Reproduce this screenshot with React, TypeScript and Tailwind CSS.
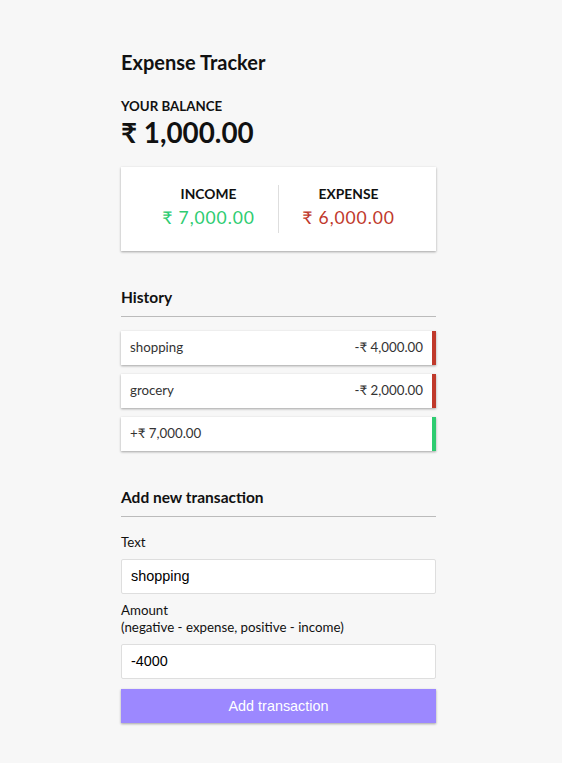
const shadow = 'shadow-[0_1px_3px_rgba(0,0,0,0.12),0_1px_2px_rgba(0,0,0,0.24)]';

type Tx = { id: number; text: string; amount: string; kind: 'plus' | 'minus' };

const transactions: Tx[] = [
  { id: 1, text: 'shopping', amount: '-₹ 4,000.00', kind: 'minus' },
  { id: 2, text: 'grocery', amount: '-₹ 2,000.00', kind: 'minus' },
  { id: 3, text: '+₹ 7,000.00', amount: '', kind: 'plus' },
];

export default function App() {
  return (
    <div className="min-h-screen bg-[#f7f7f7] font-['Lato','Noto_Sans',sans-serif] text-[13.3px] text-[#111]">
      <div className="ml-[121px] w-[315px] pt-[49px] pb-[27px]">
        <h2 className="text-[20px] font-bold leading-[26px]">Expense Tracker</h2>

        <div className="mt-[23px]">
          <h4 className="text-[13.3px] font-bold uppercase leading-[17px]">Your Balance</h4>
          <h1 className="text-[27.8px] font-bold leading-[35px]">₹ 1,000.00</h1>
        </div>

        <div className={`mt-[17px] flex bg-white p-[18px] ${shadow}`}>
          <div className="flex-1 border-r border-[#dedede] text-center">
            <h4 className="text-[13.8px] font-bold uppercase leading-[17px]">Income</h4>
            <p className="my-[4.5px] text-[17.5px] leading-[21.6px] tracking-[0.9px] text-[#2ecc71]">₹ 7,000.00</p>
          </div>
          <div className="flex-1 text-center">
            <h4 className="text-[13.8px] font-bold uppercase leading-[17px]">Expense</h4>
            <p className="my-[4.5px] text-[17.5px] leading-[21.6px] tracking-[0.9px] text-[#c0392b]">₹ 6,000.00</p>
          </div>
        </div>

        <h3 className="mt-[36px] border-b border-[#bbb] pb-[9px] text-[15.5px] font-bold leading-[20px]">History</h3>
        <ul className="mt-[14px] flex flex-col gap-[9px]">
          {transactions.map((t) => (
            <li
              key={t.id}
              className={`flex h-[34px] items-center justify-between bg-white px-[9px] text-[#333] ${shadow} ${
                t.kind === 'plus' ? 'border-r-[4.5px] border-[#2ecc71]' : 'border-r-[4.5px] border-[#c0392b]'
              }`}
            >
              <span>{t.text}</span>
              <span>{t.amount}</span>
            </li>
          ))}
        </ul>

        <h3 className="mt-[36px] border-b border-[#bbb] pb-[9px] text-[15.5px] font-bold leading-[20px]">Add new transaction</h3>
        <form className="mt-[8px]">
          <div>
            <label className="mt-[9px] mb-[8px] inline-block leading-[17px]">Text</label>
            <input
              type="text"
              defaultValue="shopping"
              className="block h-[35px] w-full rounded-[2px] border border-[#dedede] bg-white px-[9px] font-['Liberation_Sans',Arial,sans-serif] text-[14.4px] text-black outline-none"
            />
          </div>
          <div>
            <label className="my-[8px] inline-block leading-[17px]">
              Amount <br />
              (negative - expense, positive - income)
            </label>
            <input
              type="text"
              defaultValue="-4000"
              className="block h-[35px] w-full rounded-[2px] border border-[#dedede] bg-white px-[9px] font-['Liberation_Sans',Arial,sans-serif] text-[14.4px] text-black outline-none"
            />
          </div>
          <button
            type="button"
            className={`mt-[10px] block h-[34px] w-full bg-[#9c88ff] pt-[2px] font-['Liberation_Sans',Arial,sans-serif] text-[14.4px] text-white ${shadow}`}
          >
            Add transaction
          </button>
        </form>
      </div>
    </div>
  );
}
